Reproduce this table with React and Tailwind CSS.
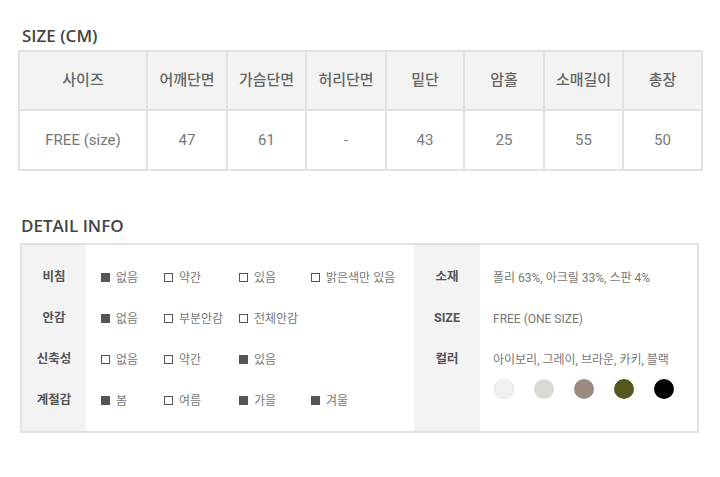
import React from "react";

const FONT = { fontFamily: 'Roboto, "Noto Sans CJK KR", sans-serif' };
const TITLE = { fontFamily: '"Open Sans", "Noto Sans CJK KR", sans-serif' };

const headers = ["사이즈", "어깨단면", "가슴단면", "허리단면", "밑단", "암홀", "소매길이", "총장"];
const values = ["FREE (size)", "47", "61", "-", "43", "25", "55", "50"];

const leftRows = [
  { label: "비침", opts: [["없음", 1], ["약간", 0], ["있음", 0], ["밝은색만 있음", 0]] },
  { label: "안감", opts: [["없음", 1], ["부분안감", 0], ["전체안감", 0]] },
  { label: "신축성", opts: [["없음", 0], ["약간", 0], ["있음", 1]] },
  { label: "계절감", opts: [["봄", 1], ["여름", 0], ["가을", 1], ["겨울", 1]] },
];

const colors = ["#f2f0ec", "#dad9d6", "#9b8a7f", "#56561f", "#030303"];

function Box({ on }) {
  return on ? (
    <span className="inline-block w-[9px] h-[9px] bg-[#555555] shrink-0" />
  ) : (
    <span className="inline-block w-[9px] h-[9px] border-[1.5px] border-[#555555] bg-white shrink-0" />
  );
}

export default function App() {
  return (
    <div className="w-[720px] h-[477px] bg-white text-[#555]" style={FONT}>
      <div className="pt-[26px] pl-[22px] text-[17px] leading-[20px] font-semibold text-[#444]" style={TITLE}>SIZE (CM)</div>
      <div className="ml-[18px] mt-[4px] w-[685px] border-2 border-[#e2e2e2]">
        <div className="grid grid-cols-[128px_80px_79px_80px_78px_80px_79px_1fr] bg-[#f3f3f3] h-[59px] border-b-2 border-[#e2e2e2]">
          {headers.map((h, i) => (
            <div
              key={i}
              className={`flex items-center justify-center text-[15px] font-medium text-[#666] ${i < 7 ? "border-r-2 border-[#e2e2e2]" : ""}`}
            >
              {h}
            </div>
          ))}
        </div>
        <div className="grid grid-cols-[128px_80px_79px_80px_78px_80px_79px_1fr] h-[58px]">
          {values.map((v, i) => (
            <div
              key={i}
              className={`flex items-center justify-center text-[15px] text-[#777] ${i < 7 ? "border-r-2 border-[#e2e2e2]" : ""}`}
            >
              {v}
            </div>
          ))}
        </div>
      </div>

      <div className="mt-[45px] pl-[21px] text-[17px] leading-[20px] font-semibold text-[#444]" style={TITLE}>DETAIL INFO</div>
      <div className="ml-[20px] mt-[7px] w-[679px] h-[190px] border-2 border-[#e2e2e2] flex">
        <div className="flex w-[392px]">
          <div className="w-[64px] bg-[#f3f3f3] pt-[12px] flex flex-col">
            {leftRows.map((r) => (
              <div key={r.label} className="h-[41px] flex items-center justify-center text-[12.5px] font-bold text-[#555]">
                {r.label}
              </div>
            ))}
          </div>
          <div className="pl-[15px] pt-[12px] flex flex-col">
            {leftRows.map((r) => (
              <div key={r.label} className="h-[41px] grid grid-cols-[63px_75px_72px_auto] items-center">
                {r.opts.map(([t, on]) => (
                  <div key={t} className="flex items-center gap-[6px] text-[12px] text-[#777] whitespace-nowrap">
                    <Box on={on} />
                    <span>{t}</span>
                  </div>
                ))}
              </div>
            ))}
          </div>
        </div>
        <div className="flex flex-1">
          <div className="w-[66px] bg-[#f3f3f3] pt-[12px] flex flex-col">
            {["소재", "SIZE", "컬러"].map((l) => (
              <div key={l} className="h-[41px] flex items-center justify-center text-[12.5px] font-bold text-[#555]">
                {l}
              </div>
            ))}
          </div>
          <div className="pl-[13px] pt-[12px] flex flex-col text-[12px] text-[#777]">
            <div className="h-[41px] flex items-center">폴리 63%, 아크릴 33%, 스판 4%</div>
            <div className="h-[41px] flex items-center">FREE (ONE SIZE)</div>
            <div className="h-[41px] flex items-center">아이보리, 그레이, 브라운, 카키, 블랙</div>
            <div className="flex gap-[20px] pl-[1px] -mt-[1px]">
              {colors.map((c, i) => (
                <span
                  key={i}
                  className={`block w-[20px] h-[20px] rounded-full ${i === 0 ? "border border-[#e4e2de]" : ""}`}
                  style={{ backgroundColor: c }}
                />
              ))}
            </div>
          </div>
        </div>
      </div>
    </div>
  );
}
